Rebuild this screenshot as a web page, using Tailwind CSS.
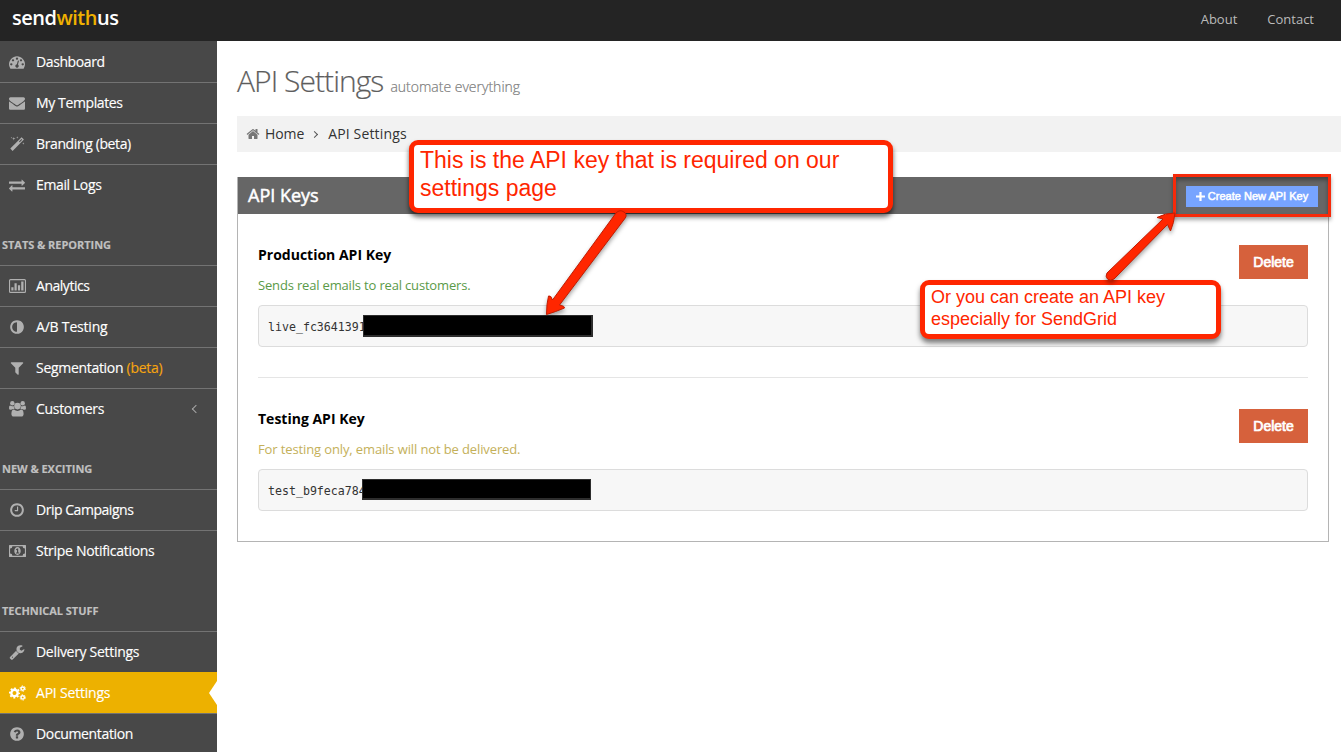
<!DOCTYPE html>
<html lang="en">
<head>
<meta charset="utf-8">
<title>API Settings</title>
<script src="https://cdn.jsdelivr.net/npm/@tailwindcss/browser@4"></script>
</head>
<body class="relative h-[752px] w-[1341px] overflow-hidden bg-white font-['Open_Sans',sans-serif] text-[13px] text-[#333]">
<svg class="hidden">
  <symbol id="dash" preserveAspectRatio="xMinYMid" viewBox="0 0 1792 1792"><path d="M384 1152q0-53-37.5-90.5t-90.5-37.5-90.5 37.5-37.5 90.5 37.5 90.5 90.5 37.5 90.5-37.5 37.5-90.5zm192-448q0-53-37.5-90.5t-90.5-37.5-90.5 37.5-37.5 90.5 37.5 90.5 90.5 37.5 90.5-37.5 37.5-90.5zm428 481l101-382q6-26-7.500-48.500t-38.500-29.500-48 6.500-30 39.500l-101 382q-60 5-107 43.500t-63 98.500q-20 77 20 146t117 89 146-20 89-117q16-60-6-117t-72-91zm660-33q0-53-37.500-90.500t-90.500-37.500-90.500 37.500-37.500 90.500 37.500 90.500 90.500 37.500 90.500-37.500 37.500-90.500zm-640-640q0-53-37.500-90.500t-90.500-37.500-90.500 37.500-37.500 90.500 37.500 90.500 90.500 37.500 90.500-37.500 37.500-90.500zm448 192q0-53-37.500-90.500t-90.500-37.500-90.500 37.500-37.500 90.500 37.500 90.500 90.500 37.500 90.500-37.500 37.500-90.500zm320 448q0 261-141 483-19 29-54 29h-1402q-35 0-54-29-141-221-141-483 0-182 71-348t191-286 286-191 348-71 348 71 286 191 191 286 71 348z"/></symbol>
  <symbol id="mail" preserveAspectRatio="xMinYMid" viewBox="0 0 1792 1792"><path d="M1792 710v794q0 66-47 113t-113 47h-1472q-66 0-113-47t-47-113v-794q44 49 101 87 362 246 497 345 57 42 92.500 65.500t94.500 48 110 24.500h2q51 0 110-24.500t94.500-48 92.500-65.500q170-123 498-345 57-39 100-87zm0-294q0 79-49 151t-122 123q-376 261-468 325-10 7-42.500 31t-54 38.500-52 32.500-57.500 27-50 9h-2q-23 0-50-9t-57.500-27-52-32.500-54-38.500-42.500-31q-91-64-262-182.500t-205-142.500q-62-42-117-115.500t-55-136.500q0-78 41.500-130t118.500-52h1472q65 0 112.500 47t47.500 113z"/></symbol>
  <symbol id="magic" preserveAspectRatio="xMinYMid" viewBox="0 0 16 16"><path fill-rule="evenodd" d="M12.600 1.300 14.900 3.600 3.600 14.900 1.300 12.600zM12.500 3 10 5.500 10.700 6.200 13.200 3.700zM4.800.9 5.200 2.300 6.600 2.700 5.200 3.100 4.800 4.500 4.400 3.100 3 2.700 4.400 2.300zM8.300.3 8.600 1.200 9.500 1.500 8.600 1.800 8.300 2.700 8 1.800 7.100 1.500 8 1.200zM14.300 6.300 14.600 7.200 15.500 7.500 14.600 7.800 14.300 8.700 14 7.800 13.100 7.500 14 7.200zM2.500 1 2.700 1.600 3.300 1.800 2.700 2 2.500 2.600 2.300 2 1.700 1.800 2.300 1.600z"/></symbol>
  <symbol id="exchange" preserveAspectRatio="xMinYMid" viewBox="0 0 1792 1792"><path d="M1792 1184v192q0 13-9.500 22.500t-22.500 9.500h-1376v192q0 13-9.500 22.500t-22.500 9.500q-12 0-24-10l-319-320q-9-9-9-22 0-14 9-23l320-320q9-9 23-9 13 0 22.500 9.500t9.500 22.500v192h1376q13 0 22.500 9.500t9.500 22.500zm0-544q0 14-9 23l-320 320q-9 9-23 9-13 0-22.500-9.500t-9.500-22.500v-192h-1376q-13 0-22.500-9.500t-9.500-22.500v-192q0-13 9.500-22.500t22.500-9.500h1376v-192q0-14 9-23t23-9q12 0 24 10l319 319q9 9 9 23z"/></symbol>
  <symbol id="chart" viewBox="0 0 17 16"><path fill-rule="evenodd" d="M1.500 1h14A1.500 1.500 0 0 1 17 2.500v11a1.500 1.500 0 0 1-1.500 1.500h-14A1.500 1.500 0 0 1 0 13.500v-11A1.500 1.500 0 0 1 1.500 1zM1.500 2.200a.4.4 0 0 0-.4.4v10.800c0 .2.200.4.4.4h14a.4.4 0 0 0 .4-.4V2.600a.4.4 0 0 0-.4-.4z"/><path d="M2.300 9.200h2.200v3.400H2.300zM5.500 5.200h2.200v7.400H5.500zM8.900 7.300h2.200v5.300H8.900zM12.200 3.600h2.300v9h-2.300z"/></symbol>
  <symbol id="adjust" preserveAspectRatio="xMinYMid" viewBox="0 0 1792 1792"><path d="M896 1440v-1088q-148 0-273 73t-198 198-73 273 73 273 198 198 273 73zm768-544q0 209-103 385.500t-279.500 279.500-385.500 103-385.500-103-279.500-279.500-103-385.500 103-385.500 279.500-279.500 385.500-103 385.500 103 279.500 279.500 103 385.500z"/></symbol>
  <symbol id="filter" preserveAspectRatio="xMinYMid" viewBox="0 0 1792 1792"><path d="M1595 295q17 41-14 70l-493 493v742q0 42-39 59-13 5-25 5-27 0-45-19l-256-256q-19-19-19-45v-486l-493-493q-31-29-14-70 17-39 59-39h1280q42 0 59 39z"/></symbol>
  <symbol id="users" viewBox="0 0 17 16"><circle cx="3.300" cy="2.300" r="2.200"/><circle cx="13.700" cy="2.300" r="2.200"/><circle cx="8.500" cy="5.100" r="3.300"/><path d="M1.100 4.600Q2.200 5.300 3.300 5.300 4.100 5.300 4.800 5 4.700 6.800 5.700 8H4.400Q3.200 8 2.200 8.800H1.500Q0 8.800 0 7.300 0 4.400 1.100 4.600zM15.900 4.600Q14.800 5.300 13.700 5.300 12.900 5.300 12.200 5 12.300 6.800 11.300 8H12.600Q13.800 8 14.800 8.800H15.500Q17 8.800 17 7.300 17 4.400 15.900 4.600zM5 8.600Q6.600 9.900 8.500 9.900T12 8.600Q14.400 8.500 14.600 12.700 14.600 15.500 12.300 15.500H4.700Q2.400 15.500 2.400 12.700 2.600 8.500 5 8.600z"/></symbol>
  <symbol id="clock" preserveAspectRatio="xMinYMid" viewBox="0 0 1792 1792"><path d="M1024 544v448q0 14-9 23t-23 9h-320q-14 0-23-9t-9-23v-64q0-14 9-23t23-9h224v-352q0-14 9-23t23-9h64q14 0 23 9t9 23zm416 352q0-148-73-273t-198-198-273-73-273 73-198 198-73 273 73 273 198 198 273 73 273-73 198-198 73-273zm224 0q0 209-103 385.500t-279.500 279.500-385.500 103-385.500-103-279.500-279.500-103-385.500 103-385.500 279.500-279.500 385.500-103 385.500 103 279.500 279.500 103 385.500z"/></symbol>
  <symbol id="money" viewBox="0 0 17 16"><path fill-rule="evenodd" d="M.6 2h15.800q.6 0 .6.600v10.800q0 .6-.6.600H.6q-.6 0-.6-.6V2.600Q0 2 .6 2zM3.400 3.200Q3.400 5.500 1.100 5.500v5Q3.400 10.500 3.400 12.800h10.200Q13.600 10.500 15.900 10.500v-5Q13.600 5.500 13.600 3.200z"/><path fill-rule="evenodd" d="M8.500 4.100C10.500 4.100 11.700 5.900 11.700 8S10.500 11.900 8.500 11.900 5.300 10.100 5.300 8 6.500 4.100 8.500 4.100zM8.200 5.400 6.800 6.600 7.400 7.300 8 6.900V9.500H7v1H10.200V9.500H9.200V5.400z"/></symbol>
  <symbol id="wrench" preserveAspectRatio="xMinYMid" viewBox="0 0 1792 1792"><path d="M448 1472q0-26-19-45t-45-19-45 19-19 45 19 45 45 19 45-19 19-45zm644-420l-682 682q-37 37-90 37-52 0-91-37l-106-108q-38-36-38-90 0-53 38-91l681-681q39 98 114.500 173.500t173.500 114.500zm634-435q0 39-23 106-47 134-164.500 217.500t-258.500 83.500q-185 0-316.500-131.500t-131.500-316.500 131.500-316.500 316.500-131.500q58 0 121.500 16.500t107.500 46.500q16 11 16 28t-16 28l-293 169v224l193 107q5-3 79-48.500t135.500-81 70.500-35.500q15 0 23.500 10t8.500 25z"/></symbol>
  <symbol id="cogs" viewBox="0 0 17 16"><g fill="none" stroke="currentColor"><circle cx="5.500" cy="8" r="3.200" stroke-width="2.400"/><circle cx="5.500" cy="8" r="4.700" stroke-width="1.700" stroke-dasharray="1.850 1.841" stroke-dashoffset=".92"/><circle cx="13.700" cy="3.600" r="1.700" stroke-width="1.500"/><circle cx="13.700" cy="3.600" r="2.700" stroke-width="1" stroke-dasharray="1.400 1.427"/><circle cx="13.700" cy="12.400" r="1.700" stroke-width="1.500"/><circle cx="13.700" cy="12.400" r="2.700" stroke-width="1" stroke-dasharray="1.400 1.427"/></g></symbol>
  <symbol id="help" preserveAspectRatio="xMinYMid" viewBox="0 0 1792 1792"><path d="M1024 1376v-192q0-14-9-23t-23-9h-192q-14 0-23 9t-9 23v192q0 14 9 23t23 9h192q14 0 23-9t9-23zm256-672q0-88-55.500-163t-138.500-116-170-41q-243 0-371 213-15 24 8 42l132 100q7 6 19 6 16 0 25-12 53-68 86-92 34-24 86-24 48 0 85.500 26t37.500 59q0 38-20 61t-68 45q-63 28-115.500 86.500t-52.500 125.500v36q0 14 9 23t23 9h192q14 0 23-9t9-23q0-19 21.500-49.500t54.500-49.500q32-18 49-28.500t46-35 44.500-48 28-60.500 12.500-81zm384 192q0 209-103 385.500t-279.500 279.500-385.500 103-385.500-103-279.500-279.500-103-385.500 103-385.500 279.500-279.500 385.500-103 385.500 103 279.500 279.500 103 385.500z"/></symbol>
  <symbol id="home" viewBox="0 0 1792 1792"><path d="M1472 992v480q0 26-19 45t-45 19h-384v-384h-256v384h-384q-26 0-45-19t-19-45v-480q0-1 .5-3t.5-3l575-474 575 474q1 2 1 6zm223-69l-62 74q-8 9-21 11h-3q-13 0-21-7l-692-577-692 577q-12 8-24 7-13-2-21-11l-62-74q-8-10-7-23.500t11-21.500l719-599q32-26 76-26t76 26l244 204v-195q0-14 9-23t23-9h192q14 0 23 9t9 23v408l219 182q10 8 11 21.500t-7 23.500z"/></symbol>
</svg>

<header class="flex h-[41px] items-center justify-between bg-[#242424] pr-[27px] pl-3">
  <div class="-mt-1.5 text-[20px] leading-7 font-semibold tracking-[-0.5px] text-white">send<span class="text-[#f0b100]">with</span>us</div>
  <nav class="mb-0.5 flex gap-[30px] text-[13px] text-[#bbb]"><a>About</a><a>Contact</a></nav>
</header>

<div class="flex h-[711px]">
  <aside class="w-[217px] shrink-0 overflow-hidden bg-[#484848] text-[14px] tracking-[-0.3px] text-white [-webkit-text-stroke:0.15px_currentColor] [&_li>span]:-mt-0.5 [&_svg]:fill-[#b0b0b0] [&_svg]:[stroke-width:0]">
    <ul class="[&_svg]:mr-[10px] [&_svg]:-mt-px [&_svg]:h-4 [&_svg]:w-[17px] [&>li]:flex [&>li]:h-[41px] [&>li]:items-center [&>li]:border-t [&>li]:border-[#737373] [&>li]:pl-[9px]">
      <li class="border-t-transparent!"><svg><use href="#dash"/></svg><span class="tracking-[-0.4px]">Dashboard</span></li>
      <li><svg><use href="#mail"/></svg><span class="tracking-[-0.38px]">My Templates</span></li>
      <li><svg><use href="#magic"/></svg><span class="tracking-[-0.38px]">Branding (beta)</span></li>
      <li><svg><use href="#exchange"/></svg><span class="tracking-[-0.38px]">Email Logs</span></li>
    </ul>
    <h3 class="flex h-[60px] items-end pb-3 pl-0.5 text-[11px] leading-4 font-bold tracking-[-0.04px] text-[#c0c0c0]">STATS &amp; REPORTING</h3>
    <ul class="[&_svg]:mr-[10px] [&_svg]:-mt-px [&_svg]:h-4 [&_svg]:w-[17px] [&>li]:flex [&>li]:h-[41px] [&>li]:items-center [&>li]:border-t [&>li]:border-[#737373] [&>li]:pl-[9px]">
      <li><svg><use href="#chart"/></svg><span class="tracking-[-0.47px]">Analytics</span></li>
      <li><svg><use href="#adjust"/></svg><span class="tracking-[-0.2px]">A/B Testing</span></li>
      <li><svg><use href="#filter"/></svg><span>Segmentation <span class="text-[#f5a50f]">(beta)</span></span></li>
      <li><svg><use href="#users"/></svg><span>Customers</span><i class="mr-[18px] ml-auto size-[6px] rotate-45 border-b-[1.5px] border-l-[1.5px] border-[#a8a8a8]"></i></li>
    </ul>
    <h3 class="flex h-[60px] items-end pb-3 pl-0.5 text-[11px] leading-4 font-bold tracking-[-0.04px] text-[#c0c0c0]">NEW &amp; EXCITING</h3>
    <ul class="[&_svg]:mr-[10px] [&_svg]:-mt-px [&_svg]:h-4 [&_svg]:w-[17px] [&>li]:flex [&>li]:h-[41px] [&>li]:items-center [&>li]:border-t [&>li]:border-[#737373] [&>li]:pl-[9px]">
      <li><svg><use href="#clock"/></svg><span class="tracking-[-0.47px]">Drip Campaigns</span></li>
      <li><svg><use href="#money"/></svg><span>Stripe Notifications</span></li>
    </ul>
    <h3 class="flex h-[60px] items-end pb-3 pl-0.5 text-[11px] leading-4 font-bold tracking-[-0.04px] text-[#c0c0c0]">TECHNICAL STUFF</h3>
    <ul class="[&_svg]:mr-[10px] [&_svg]:-mt-px [&_svg]:h-4 [&_svg]:w-[17px] [&>li]:flex [&>li]:h-[41px] [&>li]:items-center [&>li]:border-t [&>li]:border-[#737373] [&>li]:pl-[9px]">
      <li><svg><use href="#wrench"/></svg><span>Delivery Settings</span></li>
      <li class="border-[#edb100]! bg-[#edb100]"><svg class="fill-white! text-white"><use href="#cogs"/></svg><span class="tracking-[-0.2px]">API Settings</span><i class="ml-auto h-6 w-2 bg-white [clip-path:polygon(100%_0,100%_100%,0_50%)]"></i></li>
      <li><svg><use href="#help"/></svg><span class="tracking-[-0.35px]">Documentation</span></li>
    </ul>
  </aside>

  <main class="flex-1 pl-5">
    <h1 class="flex h-[75px] items-baseline gap-[7px] pt-5 text-[30px] leading-10 font-light tracking-[-0.960px] text-[#5c5c5c] [-webkit-text-stroke:0.2px_#777]">API Settings<small class="text-[14px] tracking-normal text-[#808080]">automate everything</small></h1>
    <nav class="flex h-9 items-center bg-[#f2f2f2] pl-2.5 text-[14px] text-[#333]"><svg class="mr-[5px] -ml-px size-[14px] fill-[#777]"><use href="#home"/></svg><span class="-mt-0.5 tracking-[-0.1px]">Home</span><i class="mr-[11px] ml-2 size-[5px] rotate-45 border-t border-r border-[#555]"></i><span class="-mt-0.5 tracking-[0.150px]">API Settings</span></nav>
    <section class="mt-[25px] mr-3 h-[365px] border border-t-0 border-[#b4b4b4]">
      <div class="-mx-px flex h-[37px] items-center justify-between border-l border-[#b4b4b4] bg-[#666] pr-[11px] pl-2.5 text-white">
        <h2 class="text-[18px] [-webkit-text-stroke:0.5px_white]">API Keys</h2>
        <button class="mt-px flex h-[21px] w-[132px] items-center justify-center gap-[3px] bg-[#77a4ff] font-['Liberation_Sans',sans-serif] text-[11px] [-webkit-text-stroke:0.5px_white]"><svg class="size-[9px]" viewBox="0 0 9 9"><path d="M3.400 0h2.200v3.400H9v2.200H5.600V9H3.400V5.600H0V3.400h3.400z" fill="white"/></svg>Create New API Key</button>
      </div>
      <div class="px-5">
        <div class="flex h-[164px] flex-col border-b border-[#e5e5e5] pt-[31px]">
          <div class="flex justify-between">
            <div>
              <h4 class="text-[14px] leading-5 font-bold text-black">Production API Key</h4>
              <p class="mt-[11px] text-[13px] leading-[18px] tracking-[-0.170px] text-[#5a9a48]">Sends real emails to real customers.</p>
            </div>
            <button class="h-[34px] w-[69px] bg-[#d6613c] font-['Liberation_Sans',sans-serif] text-[14px] text-white [-webkit-text-stroke:0.7px_white]">Delete</button>
          </div>
          <pre class="relative mt-[11px] h-[42px] rounded-[4px] border border-[#dcdcdc] bg-[#f7f7f7] pl-[9px] font-['DejaVu_Sans_Mono',monospace] text-[11.600px] leading-[43px] text-[#333]">live_fc3641391<span class="absolute top-[9px] left-[104px] h-[22px] w-[230px] border border-[#2d2d2d] border-r-2 border-b-2 bg-black"></span></pre>
        </div>
        <div class="flex h-[164px] flex-col pt-[31px]">
          <div class="flex justify-between">
            <div>
              <h4 class="text-[14px] leading-5 font-bold text-black">Testing API Key</h4>
              <p class="mt-[11px] text-[13px] leading-[18px] tracking-[-0.120px] text-[#c4b05a]">For testing only, emails will not be delivered.</p>
            </div>
            <button class="h-[34px] w-[69px] bg-[#d6613c] font-['Liberation_Sans',sans-serif] text-[14px] text-white [-webkit-text-stroke:0.7px_white]">Delete</button>
          </div>
          <pre class="relative mt-[11px] h-[42px] rounded-[4px] border border-[#dcdcdc] bg-[#f7f7f7] pl-[9px] font-['DejaVu_Sans_Mono',monospace] text-[11.600px] leading-[43px] text-[#333]">test_b9feca784<span class="absolute top-[9px] left-[103px] h-[21px] w-[229px] border border-[#2d2d2d] border-b-2 bg-black"></span></pre>
        </div>
      </div>
    </section>
  </main>
</div>

<!-- Callouts drawn over the page -->
<div class="absolute top-[174px] left-[1173px] h-[43px] w-[158px] border-[3px] border-[#f62a0a] shadow-[0_3px_4px_rgba(0,0,0,0.35),inset_0_3px_4px_rgba(0,0,0,0.35)]"></div>
<div class="absolute top-[140px] left-[409px] h-[73px] w-[484px] rounded-[9px] border-[5px] border-[#ff2600] bg-white pt-px pl-1.5 font-['Liberation_Sans',sans-serif] text-[23px] leading-7 text-[#ff2600] shadow-[0_4px_5px_rgba(0,0,0,0.6)]">This is the API key that is required on our<br>settings page</div>
<div class="absolute top-[280px] left-[920px] h-[59px] w-[301px] rounded-[9px] border-[5px] border-[#ff2600] bg-white pt-px pl-1.5 font-['Liberation_Sans',sans-serif] text-[18px] leading-[22px] text-[#ff2600] shadow-[0_4px_5px_rgba(0,0,0,0.5)]">Or you can create an API key<br>especially for SendGrid</div>
<svg class="absolute inset-0 h-[752px] w-[1341px] drop-shadow-[0_3px_2px_rgba(0,0,0,0.35)]" fill="#ff2600" stroke="#c01c00" stroke-width="1" stroke-linejoin="round">
  <path d="M616 213Q620 209 624 212T624.500 219L559.500 305Q565 306 564.500 308 555 312 546.500 314.500 546.500 304 548.500 296 551 295 552.500 300z"/>
  <path d="M1107 273 1163 219 1157 217.500Q1165 213 1175 213 1174 223 1170.500 231L1167.500 224.500 1114 279Q1110 281.500 1107.500 279T1107 273z"/>
</svg>
</body>
</html>
